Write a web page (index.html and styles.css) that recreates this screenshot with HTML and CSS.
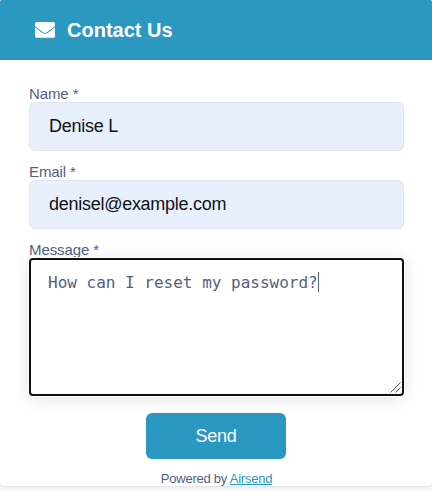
FILE: index.html
```html
<!DOCTYPE html>
<html lang="en">
<head>
<meta charset="utf-8">
<title>Contact Us</title>
<link rel="stylesheet" href="styles.css">
</head>
<body>
<main class="widget">
  <header class="header">
    <svg class="mail" viewBox="0 0 20 16" aria-hidden="true">
      <path d="M1.600 0h16.800Q20 0 20 1.600v2.300C17.800 5.700 14.700 8.100 12.400 9.900Q10 11.700 7.600 9.900C5.300 8.100 2.200 5.700 0 3.900V1.600Q0 0 1.600 0z"/>
      <path d="M0 5.200C2.100 6.900 4.900 9.100 7 10.700Q10 13 13 10.700C15.100 9.100 17.900 6.900 20 5.200v9Q20 15.800 18.400 15.800H1.600Q0 15.800 0 14.200z"/>
    </svg>
    <h1 class="title">Contact Us</h1>
  </header>
  <form class="form">
    <div class="field">
      <label class="label" for="name">Name *</label>
      <input class="input" id="name" type="text" value="Denise L">
    </div>
    <div class="field">
      <label class="label" for="email">Email *</label>
      <input class="input" id="email" type="text" value="denisel@example.com">
    </div>
    <div class="field">
      <span class="label">Message *</span>
      <div class="message"><span class="message-text">How can I reset my password?</span><span class="caret"></span>
        <svg class="grip" viewBox="0 0 11 11" aria-hidden="true"><path d="M.5 10.500l10-10M5.500 10.500l5-5"/></svg>
      </div>
    </div>
    <button class="send" type="button">Send</button>
    <p class="powered">Powered by <a class="link" href="#">Airsend</a></p>
  </form>
</main>
</body>
</html>
```
FILE: styles.css
```css
* { box-sizing: border-box; }
html { background: #fafafa; }
body {
  margin: 0;
  height: 491px;
  overflow: hidden;
  font-family: "Liberation Sans", Arial, sans-serif;
  color: #525f7f;
}
.widget {
  height: 486px;
  background: #fff;
  border-radius: 4px;
  box-shadow: 0 1px 4px rgba(0, 0, 0, .12);
}
.header {
  display: flex;
  align-items: center;
  gap: 12px;
  height: 60px;
  padding-left: 35px;
  background: #2b98c2;
  border-radius: 2px 2px 0 0;
}
.mail { width: 20px; height: 16px; fill: #fff; }
.title {
  margin: 0;
  font-size: 20px;
  line-height: 24px;
  font-weight: 700;
  color: #fff;
}
.form {
  display: flex;
  flex-direction: column;
  padding: 25px 28px 0 29px;
}
.field { margin-bottom: 12px; }
.label {
  display: block;
  height: 17px;
  font-size: 15px;
  line-height: 18px;
  letter-spacing: -.1px;
}
.input {
  display: block;
  width: 100%;
  height: 49px;
  padding: 0 19px;
  border: 1px solid #e3e5e8;
  border-radius: 6px;
  background: #e8f0fe;
  color: #111;
  font: 18px "Liberation Sans", Arial, sans-serif;
  letter-spacing: -.27px;
}
.message {
  position: relative;
  display: flex;
  align-items: flex-start;
  height: 138px;
  padding: 12px 17px;
  border: 2px solid #101010;
  border-radius: 4px;
  background: #fff;
  box-shadow: 0 0 0 1px #fff, 0 2px 16px rgba(0, 0, 0, .13);
}
.message-text {
  font: 16px/21px "DejaVu Sans Mono", monospace;
  white-space: pre;
}
.caret { width: 1px; height: 20px; background: #525f7f; }
.grip {
  position: absolute;
  right: 1px;
  bottom: 1px;
  width: 11px;
  height: 11px;
  fill: none;
  stroke: #555;
  stroke-width: 1;
}
.send {
  align-self: center;
  width: 140px;
  height: 46px;
  margin: 5px 1px 0 0;
  padding: 0;
  border: 0;
  border-radius: 6px;
  background: #2b98c2;
  color: #fff;
  font: 18px "Liberation Sans", Arial, sans-serif;
  letter-spacing: -.2px;
}
.powered {
  margin: 12px 0 0;
  text-align: center;
  font-size: 13px;
  line-height: 15px;
  letter-spacing: -.24px;
}
.link { color: #2b98c2; text-decoration: underline; }
```
